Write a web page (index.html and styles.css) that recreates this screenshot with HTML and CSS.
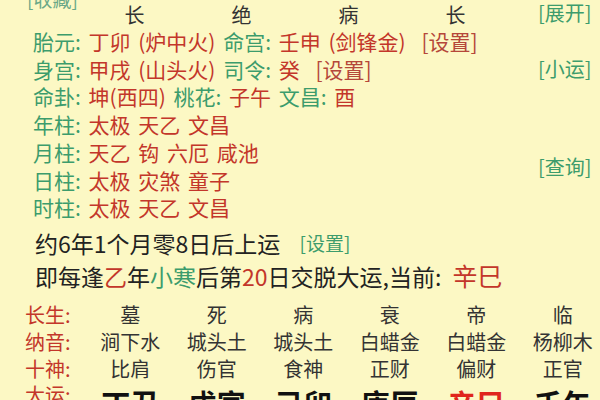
FILE: index.html
```html
<!DOCTYPE html>
<html lang="zh-CN">
<head>
<meta charset="utf-8">
<title>命盘</title>
<link rel="stylesheet" href="styles.css">
</head>
<body>
<div class="page">
  <div class="upper">
    <div class="main">
      <div class="head">
        <span class="fav">[收藏]</span>
        <span class="hc">长</span>
        <span class="hc">绝</span>
        <span class="hc">病</span>
        <span class="hc">长</span>
      </div>
      <div class="line"><span class="g">胎元:</span> <span class="r">丁卯 (炉中火)</span> <span class="g">命宫:</span> <span class="r">壬申 (剑锋金)</span> <span class="setr m8">[设置]</span></div>
      <div class="line"><span class="g">身宫:</span> <span class="r">甲戌 (山头火)</span> <span class="g">司令:</span> <span class="r">癸</span> <span class="setr m8">[设置]</span></div>
      <div class="line"><span class="g">命卦:</span> <span class="r">坤(西四)</span> <span class="g">桃花:</span> <span class="r">子午</span> <span class="g">文昌:</span> <span class="r">酉</span></div>
      <div class="line"><span class="g">年柱:</span> <span class="r">太极 天乙 文昌</span></div>
      <div class="line"><span class="g">月柱:</span> <span class="r">天乙 钩 六厄 咸池</span></div>
      <div class="line"><span class="g">日柱:</span> <span class="r">太极 灾煞 童子</span></div>
      <div class="line"><span class="g">时柱:</span> <span class="r">太极 天乙 文昌</span></div>
    </div>
    <div class="side">
      <span class="btn b1">[展开]</span>
      <span class="btn b2">[小运]</span>
      <span class="btn b3">[查询]</span>
    </div>
  </div>
  <div class="info">
    <div class="iline">约6年1个月零8日后上运 <span class="set">[设置]</span></div>
    <div class="iline">即每逢<span class="r">乙</span>年<span class="g">小寒</span>后第<span class="r">20</span>日交脱大运,当前: <span class="cur">辛巳</span></div>
  </div>
  <div class="table">
    <div class="lab">长生:</div>
    <div class="cell">墓</div><div class="cell">死</div><div class="cell">病</div><div class="cell">衰</div><div class="cell">帝</div><div class="cell">临</div>
    <div class="lab">纳音:</div>
    <div class="cell">涧下水</div><div class="cell">城头土</div><div class="cell">城头土</div><div class="cell">白蜡金</div><div class="cell">白蜡金</div><div class="cell">杨柳木</div>
    <div class="lab">十神:</div>
    <div class="cell">比肩</div><div class="cell">伤官</div><div class="cell">食神</div><div class="cell">正财</div><div class="cell">偏财</div><div class="cell">正官</div>
    <div class="lab">大运:</div>
    <div class="cell big">丁丑</div><div class="cell big">戊寅</div><div class="cell big">己卯</div><div class="cell big">庚辰</div><div class="cell big now">辛巳</div><div class="cell big">壬午</div>
  </div>
</div>
</body>
</html>
```
FILE: styles.css
```css
html, body {
  margin: 0;
  padding: 0;
  background: #fcf8c4;
  overflow: hidden;
}
body {
  width: 600px;
  height: 400px;
  font-family: "Noto Sans CJK SC", "Noto Sans", sans-serif;
  color: #222;
}
.page {
  width: 600px;
}
.upper {
  display: flex;
}
.main {
  flex: 1;
  padding-left: 33px;
}
.head {
  display: flex;
  align-items: flex-start;
  height: 26px;
  margin-top: 2px;
  margin-left: -6px;
  font-size: 20px;
  line-height: 26px;
  color: #333;
}
.fav {
  width: 54px;
  margin-top: -16px;
  font-size: 19px;
  color: #6aa888;
}
.hc {
  width: 107px;
  text-align: center;
}
.line {
  font-size: 21px;
  line-height: 27.7px;
  word-spacing: 3px;
  white-space: nowrap;
}
.m8 { margin-left: 8px; }
.g { color: #3c9c6c; }
.r { color: #c3362a; }
.setr { color: #b5473a; }
.side {
  width: 62px;
  display: flex;
  flex-direction: column;
  align-items: flex-start;
  font-size: 20px;
  line-height: 28px;
  color: #3c9c6c;
}
.b1 { margin-top: -1px; }
.b2 { margin-top: 28px; }
.b3 { margin-top: 70px; }
.info {
  padding-left: 35px;
  margin-top: 5px;
}
.iline {
  font-size: 23px;
  line-height: 32px;
  white-space: nowrap;
}
.set {
  font-size: 19px;
  color: #3c9c6c;
  vertical-align: 2px;
  margin-left: 14px;
}
.cur {
  font-size: 25px;
  color: #c3362a;
  margin-left: 6px;
}
.table {
  display: grid;
  grid-template-columns: 62px repeat(6, 86.5px);
  grid-auto-rows: 26.8px;
  padding-left: 25px;
  margin-top: 10px;
  font-size: 20px;
  line-height: 26.8px;
  color: #333;
  white-space: nowrap;
}
.lab {
  color: #c3362a;
}
.cell {
  text-align: center;
}
.big {
  font-size: 29px;
  font-weight: bold;
  color: #111;
  line-height: 34px;
  margin-top: 4px;
}
.now {
  color: #e0261c;
}
```
